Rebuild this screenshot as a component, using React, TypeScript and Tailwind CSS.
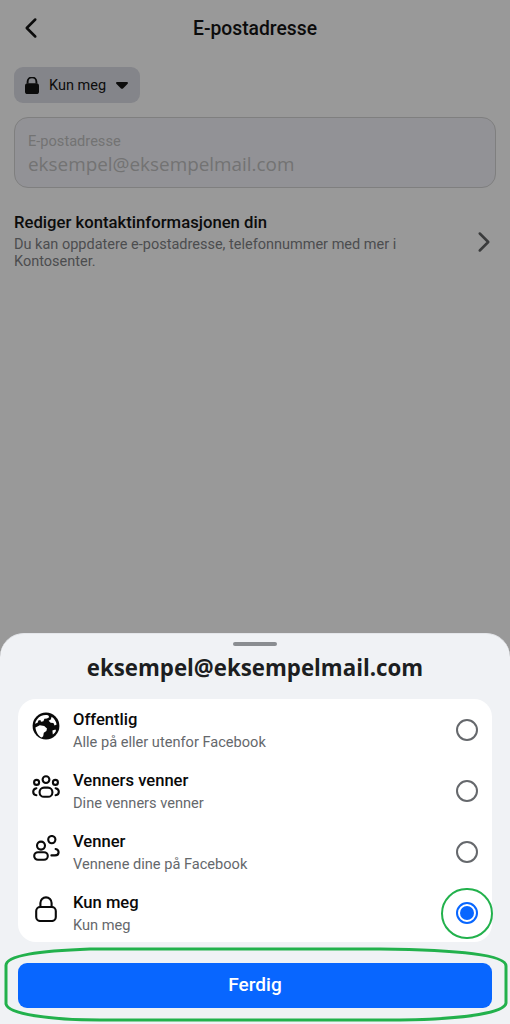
import { ChevronLeft, ChevronRight } from "lucide-react";

const roboto = "font-['Roboto',sans-serif]";

function Globe() {
    return (
        <svg width="28" height="28" viewBox="0 0 28 28">
            <circle cx="14" cy="14" r="13.4" fill="#0a0a0a" />
            <path d="M9 4c2.4-1 5-1.2 7.4-.6l.8 1.8-2.2 1.4-2.6.2-1 2.4-2.4.6-.6-1.8-2 .6-.8 2.2-2.6 1C3.8 8.4 6 5.4 9 4Z" fill="#fff" />
            <path d="M19.6 4.8c2.8 1.8 4.6 4.6 5 7.8l-2 .8-1.2-2.4-2.8-.2-2-2 2.2-1.2.8-2.8Z" fill="#fff" />
            <path d="M3.4 15.4l4.4-2.2 4.4.8 2.8 2.4-.6 2.6-2.6 1.8-.6 3.4-1.4 1.4c-3.4-1.6-5.8-5.6-6.4-10.2Z" fill="#fff" />
            <path d="M20.4 18.6l3-1.2.6 1.4c-.8 1.6-1.8 2.8-3.2 3.8l-.4-4Z" fill="#fff" />
        </svg>
    );
}

function FriendsOfFriends() {
    return (
        <svg width="28" height="24" viewBox="0 0 28 24" fill="none" stroke="#0a0a0a" strokeWidth="2.1" strokeLinecap="round">
            <circle cx="14" cy="4.6" r="3.4" />
            <circle cx="4.6" cy="7.4" r="2.5" />
            <circle cx="23.4" cy="7.4" r="2.5" />
            <rect x="7.6" y="12.6" width="12.8" height="9.2" rx="4.4" />
            <path d="M4.4 13.2C2.4 13.6 1.2 15 1.2 16.8c0 1.8 1.2 3.2 3.2 3.4" />
            <path d="M23.6 13.2c2 .4 3.2 1.8 3.2 3.6 0 1.8-1.2 3.2-3.2 3.4" />
        </svg>
    );
}

function Friends() {
    return (
        <svg width="27" height="26" viewBox="0 0 27 26" fill="none" stroke="#0a0a0a" strokeWidth="2.1" strokeLinecap="round">
            <circle cx="8" cy="10.6" r="4" />
            <circle cx="18.8" cy="4.6" r="3.6" />
            <rect x="1.2" y="17.2" width="13.6" height="7.6" rx="3.8" />
            <path d="M18.4 20.4h3.6c2.2 0 3.6-1.4 3.6-3.2 0-1.6-1.2-2.8-3-3.2" />
        </svg>
    );
}

function LockOutline() {
    return (
        <svg width="22" height="26" viewBox="0 0 22 26" fill="none" stroke="#0a0a0a" strokeWidth="2.1">
            <rect x="1.2" y="11" width="19.6" height="14" rx="4" />
            <path d="M5.4 11V7a5.6 5.6 0 0 1 11.2 0v4" />
        </svg>
    );
}

function LockSolid() {
    return (
        <svg width="14" height="17" viewBox="0 0 14 17">
            <path d="M2.6 6.6V4.8a4.4 4.4 0 0 1 8.8 0v1.8" fill="none" stroke="#0b0b0b" strokeWidth="1.9" />
            <rect x="0" y="6.2" width="14" height="10.8" rx="2.6" fill="#0b0b0b" />
        </svg>
    );
}

function Caret() {
    return (
        <svg width="12" height="7" viewBox="0 0 12 7">
            <path d="M1.2 0h9.6c1 0 1.5 1.1.9 1.8L7 6.4c-.5.6-1.5.6-2 0L.3 1.8C-.3 1.1.2 0 1.2 0Z" fill="#0c0c0c" />
        </svg>
    );
}

function Radio({ checked }: { checked?: boolean }) {
    if (checked) {
        return (
            <div className="w-[22px] h-[22px] rounded-full border-2 border-[#0866ff] flex items-center justify-center">
                <div className="w-[14px] h-[14px] rounded-full bg-[#0866ff]" />
            </div>
        );
    }
    return <div className="w-[22px] h-[22px] rounded-full border-2 border-[#65686c]" />;
}

const options = [
    { title: "Offentlig", sub: "Alle på eller utenfor Facebook", icon: <Globe /> },
    { title: "Venners venner", sub: "Dine venners venner", icon: <FriendsOfFriends /> },
    { title: "Venner", sub: "Vennene dine på Facebook", icon: <Friends /> },
    { title: "Kun meg", sub: "Kun meg", icon: <LockOutline />, checked: true },
];

export default function App() {
    return (
        <div className={`relative h-[1024px] w-[510px] overflow-hidden bg-[#999999] flex flex-col ${roboto}`}>
            {/* Page behind the sheet */}
            <div className="flex items-center h-[56px] px-[18px] relative">
                <ChevronLeft size={34} strokeWidth={1.8} className="text-[#0c0c0c] -ml-[4px]" />
                <div className="absolute inset-x-0 top-[17px] text-center text-[19.3px] leading-[24px] font-medium text-[#0c0c0c]">E-postadresse</div>
            </div>

            <div className="px-[14px] pt-[11px]">
                <div className="w-[126px] h-[36px] rounded-[9px] bg-[#84858a] flex items-center pl-[11px] gap-[10px]">
                    <LockSolid />
                    <span className="text-[14.5px] text-[#0c0c0c] mt-[1px]">Kun meg</span>
                    <Caret />
                </div>

                <div className="mt-[14px] h-[71px] rounded-[14px] border border-[#7f7f7f] bg-[#929296] px-[13px] pt-[14px]">
                    <div className="text-[14.6px] leading-[18px] text-[#737373]">E-postadresse</div>
                    <div className="font-['Open_Sans',sans-serif] text-[18.9px] leading-[26px] mt-[1px] text-[#737373]">eksempel@eksempelmail.com</div>
                </div>

                <div className="mt-[24px] flex items-center">
                    <div className="flex-1">
                        <div className="text-[16.7px] leading-[22px] font-medium text-[#0c0c0c]">Rediger kontaktinformasjonen din</div>
                        <div className="text-[14.5px] leading-[17px] mt-[2px] text-[#4c4d4f] w-[420px]">Du kan oppdatere e-postadresse, telefonnummer med mer i Kontosenter.</div>
                    </div>
                    <ChevronRight size={34} strokeWidth={1.8} className="text-[#3a3b3c] -mr-[5px] mt-[2px]" />
                </div>
            </div>

            {/* Bottom sheet */}
            <div className="mt-auto h-[391px] rounded-t-[24px] bg-[#f0f2f5] px-[18px] pt-[8px] border-t border-[#e4e6ea]">
                <div className="mx-auto w-[44px] h-[4px] rounded-full bg-[#8a8d91]" />
                <div className="font-['Open_Sans',sans-serif] text-center text-[22.25px] leading-[30px] font-bold mt-[7px] text-[#1c1e21]">eksempel@eksempelmail.com</div>
                <div className="mt-[16px] h-[243px] rounded-[18px] bg-white">
                    {options.map(o => (
                        <div key={o.title} className="flex items-center h-[61px] pl-[14px] pr-[14px]">
                            <div className="w-[28px] flex justify-center shrink-0 -mt-[8px]">{o.icon}</div>
                            <div className="flex-1 ml-[13px]">
                                <div className="text-[16.6px] leading-[22px] font-medium text-[#0a0a0a]">{o.title}</div>
                                <div className="text-[14.6px] leading-[18px] mt-[2px] text-[#65686c]">{o.sub}</div>
                            </div>
                            <Radio checked={o.checked} />
                        </div>
                    ))}
                </div>
                <button className="mt-[21px] w-full h-[45px] rounded-[9px] bg-[#0866ff] text-white text-[19px] font-medium">Ferdig</button>
            </div>

            {/* Green highlight marks */}
            <div className="absolute left-[441px] top-[888px] w-[52px] h-[51px] rounded-full border-[2px] border-[#22b14c]" />
            <svg className="absolute left-0 top-[940px]" width="510" height="84" viewBox="0 940 510 84" fill="none" stroke="#22b14c" strokeWidth="3">
                <path d="M90 949C40 951 5 955 6 966L6 1004C8 1014 50 1020 100 1020L400 1020C470 1019 505 1012 506 1003L506 966C506 955 460 950 380 949Z" />
            </svg>
        </div>
    );
}
